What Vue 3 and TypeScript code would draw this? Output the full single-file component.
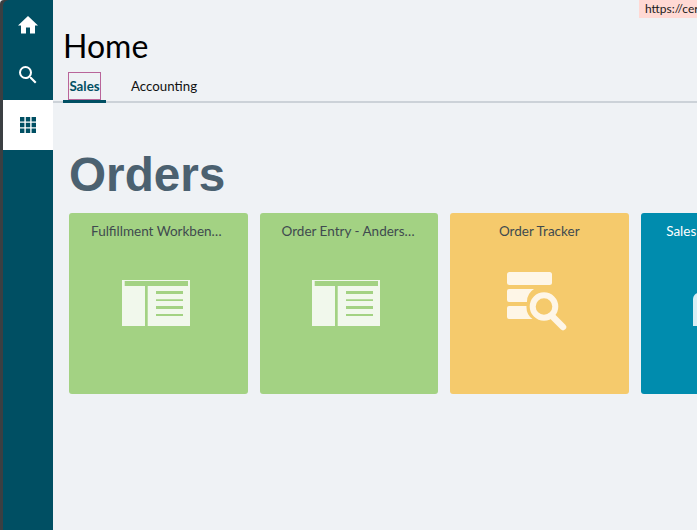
<script setup lang="ts">
interface Tile { title: string; color: string; icon: string; light?: boolean }
const tiles: Tile[] = [
  { title: 'Fulfillment Workbench', color: '#a3d283', icon: 'book' },
  { title: 'Order Entry - Anderson', color: '#a3d283', icon: 'book' },
  { title: 'Order Tracker', color: '#f5ca6c', icon: 'track' },
  { title: 'Sales Order Summary', color: '#008cae', icon: 'sales', light: true },
]
</script>

<template>
  <div class="page">
    <div class="strip">
      <nav class="rail">
        <a class="rail-btn">
          <svg width="24" height="24" viewBox="0 0 24 24"><path fill="#fff" d="M10 20.500v-6h4v6h5v-8h3L12 3 2 12.500h3v8z"/></svg>
        </a>
        <a class="rail-btn">
          <svg width="24" height="24" viewBox="0 0 24 24"><path fill="#fff" d="M15.500 14h-.79l-.28-.27A6.470 6.470 0 0 0 16 9.500 6.500 6.500 0 1 0 9.500 16c1.610 0 3.090-.59 4.230-1.570l.27.28v.79l5 4.990L20.490 19l-4.990-5zm-6 0C7.010 14 5 11.990 5 9.500S7.010 5 9.500 5 14 7.010 14 9.500 11.990 14 9.500 14z"/></svg>
        </a>
        <a class="rail-btn active">
          <svg width="24" height="24" viewBox="0 0 24 24"><path fill="#004f63" d="M4 4h4.400v4.400H4zM9.800 4h4.400v4.400H9.800zM15.600 4H20v4.400h-4.400zM4 9.800h4.400v4.400H4zM9.800 9.800h4.400v4.400H9.800zM15.600 9.800H20v4.400h-4.400zM4 15.600h4.400V20H4zM9.800 15.600h4.400V20H9.800zM15.600 15.600H20V20h-4.400z"/></svg>
        </a>
      </nav>
    </div>
    <main class="main">
      <span class="url-tip">https://cerner.example.com</span>
      <h1 class="title">Home</h1>
      <div class="tabs">
        <a class="tab selected"><span class="focus">Sales</span></a>
        <a class="tab">Accounting</a>
      </div>
      <h2 class="section">Orders</h2>
      <div class="tiles">
        <div v-for="t in tiles" :key="t.title" class="tile" :class="{ light: t.light }" :style="{ background: t.color }">
          <div class="tile-title">{{ t.title }}</div>
          <div class="tile-icon">
            <svg v-if="t.icon === 'book'" class="book" width="68" height="46" viewBox="0 0 68 46">
              <path fill="#f1f8ec" d="M0 0h68v46H0z"/>
              <path fill="#a3d283" d="M2.700 1H66v5H2.700zM23 6h2.700v40H23zM34 11h27v3H34zM34 19.300h27v1.700H34zM34 26h27v3H34zM34 34h27v2H34z"/>
            </svg>
            <svg v-else-if="t.icon === 'track'" class="track" width="60" height="59" viewBox="0 0 60 59">
              <rect fill="#fef6e7" x="0" y="0" width="45" height="13" rx="2.500"/>
              <path fill="#fef6e7" d="M2 17h25a15 15 0 0 0-7 13H2a2 2 0 0 1-2-2v-9a2 2 0 0 1 2-2zM2 34h17.500a15 15 0 0 0 6 13H2a2 2 0 0 1-2-2v-9a2 2 0 0 1 2-2z"/>
              <circle cx="37" cy="34.500" r="11.300" fill="none" stroke="#fef6e7" stroke-width="6"/>
              <path d="M45.500 44.500l10.500 10.500" stroke="#fef6e7" stroke-width="6.500" stroke-linecap="round"/>
            </svg>
            <svg v-else class="sales" width="68" height="46" viewBox="0 0 68 46">
              <path fill="#d6eef4" d="M0 46V19a6 6 0 0 1 6-6h56a6 6 0 0 1 6 6v27z"/>
            </svg>
          </div>
        </div>
      </div>
    </main>
  </div>
</template>

<style>
html, body { margin: 0; padding: 0; overflow: hidden; }
</style>

<style scoped>
.page {
  display: flex;
  width: 697px;
  height: 530px;
  overflow: hidden;
  background: #eff2f5;
  font-family: Lato, "Noto Sans", sans-serif;
}
.strip {
  flex: 0 0 53px;
  padding-left: 3px;
  box-sizing: border-box;
  background: #3b3f42;
  border-top-left-radius: 4px;
}
.rail {
  height: 100%;
  background: #004f63;
  border-top-left-radius: 6px;
  display: flex;
  flex-direction: column;
}
.rail-btn {
  height: 50px;
  display: flex;
  align-items: center;
  justify-content: center;
}
.rail-btn.active { background: #fff; }
.main {
  position: relative;
  flex: 1;
  min-width: 0;
  padding-top: 26px;
}
.url-tip {
  position: absolute;
  top: 0;
  left: 586px;
  width: 58px;
  height: 18px;
  padding-left: 6px;
  box-sizing: border-box;
  overflow: hidden;
  background: #ffd9d4;
  color: #1a1a1a;
  font-size: 12px;
  line-height: 18px;
  white-space: nowrap;
}
.title {
  margin: 0 0 0 10px;
  font-size: 32px;
  line-height: 40px;
  font-weight: 400;
  color: #000;
}
.tabs {
  display: flex;
  height: 37px;
  padding-left: 10px;
  box-sizing: border-box;
  border-bottom: 2px solid #ccd2d8;
}
.tab {
  box-sizing: border-box;
  height: 37px;
  display: flex;
  align-items: center;
  padding: 2px 0 0;
  margin-right: 20px;
  font-size: 13.300px;
  color: #111;
}
.tab.selected {
  width: 43px;
  padding: 0;
  margin-right: 25px;
  justify-content: center;
  align-items: flex-start;
  padding-top: 6px;
  border-bottom: 3px solid #004f63;
  color: #004f63;
  font-weight: 700;
}
.focus {
  box-sizing: border-box;
  width: 33px;
  height: 28px;
  line-height: 26px;
  text-align: center;
  border: 1px solid #b9659a;
}
.section {
  margin: 44px 0 0 16px;
  font-family: "Liberation Sans", Arial, sans-serif;
  font-size: 47.700px;
  line-height: 56px;
  font-weight: 700;
  color: #4b6170;
}
.tiles {
  display: flex;
  gap: 12px;
  margin-top: 10px;
  margin-left: 16px;
}
.tile {
  flex: 0 0 178.500px;
  min-width: 0;
  height: 181px;
  border-radius: 3px;
  display: flex;
  flex-direction: column;
  align-items: center;
}
.tile-title {
  box-sizing: border-box;
  width: 100%;
  margin-top: 9px;
  padding: 0 22px;
  font-size: 13.500px;
  line-height: 18px;
  color: #3f4a4f;
  text-align: center;
  overflow: hidden;
  white-space: nowrap;
  text-overflow: ellipsis;
}
.tile.light .tile-title { color: #fff; }
.tile-icon {
  box-sizing: border-box;
  width: 100%;
  padding-right: 5px;
  margin-top: 40px;
  display: flex;
  justify-content: center;
}
.track { margin-top: -8px; }
</style>
